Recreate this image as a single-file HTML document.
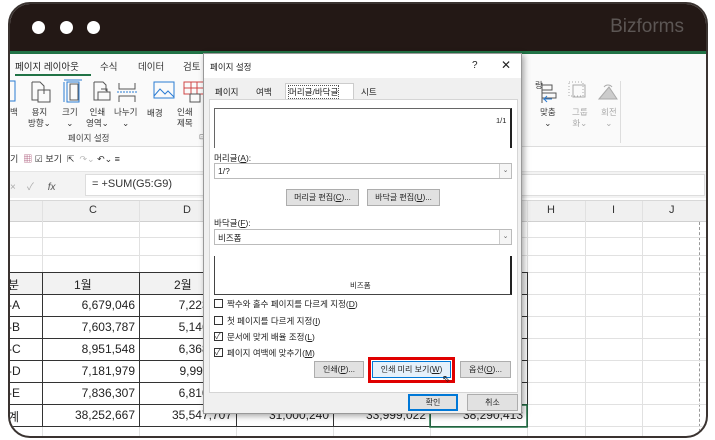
<!DOCTYPE html>
<html><head><meta charset="utf-8"><style>
*{margin:0;padding:0;box-sizing:border-box}
body{width:715px;height:440px;background:#fff;position:relative;overflow:hidden;font-family:"Liberation Sans","Noto Sans CJK KR",sans-serif;font-size:9px;color:#333}
.a{position:absolute}
.frame{left:8px;top:2px;width:700px;height:436px;border:2px solid #3a3330;border-radius:22px;overflow:hidden;background:#fff}
.bar{left:0;top:0;width:100%;height:47px;background:#231815}
.dot{width:13px;height:13px;border-radius:50%;background:#fff;top:17px}
.cell{position:absolute;font-size:12px;color:#222;text-align:right}
.hl{position:absolute;height:1px;background:#e1e1e1}
.vl{position:absolute;width:1px;background:#e1e1e1}
.btn{position:absolute;background:#e1e1e1;border:1px solid #adadad;font-size:8px;text-align:center;line-height:15px;color:#222}
.cb{position:absolute;width:9px;height:9px;border:1px solid #333;background:#fff}
.lb{position:absolute;font-size:8.5px;color:#222}
</style></head><body>
<div class="a frame">
 <div class="a bar"></div>
 <div class="a dot" style="left:22px"></div><div class="a dot" style="left:50px"></div><div class="a dot" style="left:77px"></div>
 <div class="a" style="right:22px;top:12px;font-size:19px;color:#5c5654">Bizforms</div>
 <div class="a" style="left:0;top:47px;width:100%;height:3px;background:#217346"></div>
 <div class="a" style="left:0;top:50px;width:100%;height:93px;background:#fafafa;border-bottom:1px solid #ddd"></div>
 <div class="a" style="left:5px;top:55px;font-size:9.5px;color:#222">페이지 레이아웃</div>
 <div class="a" style="left:5px;top:70px;width:76px;height:2px;background:#217346"></div>
 <div class="a" style="left:90px;top:55px;font-size:9.5px">수식</div>
 <div class="a" style="left:128px;top:55px;font-size:9.5px">데이터</div>
 <div class="a" style="left:173px;top:55px;font-size:9.5px">검토</div>
 <div class="a" style="left:0;top:103px;font-size:8.5px;line-height:11px;color:#444">백</div>
 <div class="a" style="left:18px;top:103px;font-size:8.5px;line-height:11px;text-align:center">용지<br>방향⌄</div>
 <div class="a" style="left:52px;top:103px;font-size:8.5px;line-height:11px;text-align:center">크기<br>⌄</div>
 <div class="a" style="left:76px;top:103px;font-size:8.5px;line-height:11px;text-align:center">인쇄<br>영역⌄</div>
 <div class="a" style="left:104px;top:103px;font-size:8.5px;line-height:11px;text-align:center">나누기<br>⌄</div>
 <div class="a" style="left:137px;top:103px;font-size:8.5px">배경</div>
 <div class="a" style="left:167px;top:103px;font-size:8.5px;line-height:11px;text-align:center">인쇄<br>제목</div>
 <svg class="a" style="left:0;top:74px" width="200" height="28" fill="none" stroke="#555" stroke-width="1">
  <rect x="-3" y="3" width="8" height="20" stroke="#2b7cd3"/>
  <path d="M22 4h8l4 4v8M22 4v18h6M28 12h12v12H28z"/>
  <path d="M57 4h12v20H57zM54 2h18M54 4v20" stroke="#2b7cd3"/><path d="M60 6h8v16h-8z"/>
  <path d="M84 4h9l3 3v6M84 4v18h4M88 14h12v8H88zM91 11h6v3" />
  <path d="M109 5v6h16V5M109 24v-6h16v6"/><path d="M107 14h20" stroke="#2b7cd3" stroke-dasharray="2 1"/>
  <rect x="144" y="4" width="20" height="16" stroke="#2b7cd3"/><path d="M144 18l6-7 5 5 3-3 6 6" stroke="#2b7cd3"/>
  <path d="M174 4h20v12h-20zM174 10h20M181 4v12M187 4v12" stroke="#d04545"/><path d="M180 16h10v8h-10z"/>
 </svg>
 <div class="a" style="left:58px;top:128px;font-size:8.5px;color:#444">페이지 설정</div>
 <div class="a" style="left:189px;top:129px;font-size:7px;color:#666">⊡</div>
 <div class="a" style="left:525px;top:75px;font-size:8.5px">랑</div>
 <svg class="a" style="left:530px;top:77px" width="100" height="24" fill="none" stroke="#555" stroke-width="1">
  <path d="M2 2v20M2 4h10v5H2M2 12h14v5H2"/><path d="M12 18H4l3-3M4 18l3 3" stroke="#2b7cd3"/>
  <rect x="33" y="4" width="12" height="12" stroke="#aaa"/><rect x="29" y="1" width="14" height="14" stroke="#aaa" stroke-dasharray="1 2"/>
  <path d="M59 18l10-12 8 12z" stroke="#aaa" fill="#ccc"/><path d="M64 6a5 5 0 0 1 8 0" stroke="#aaa"/>
 </svg>
 <div class="a" style="left:530px;top:103px;font-size:8.5px;line-height:11px;text-align:center">맞춤<br>⌄</div>
 <div class="a" style="left:562px;top:103px;font-size:8.5px;line-height:11px;text-align:center;color:#aaa">그룹<br>화⌄</div>
 <div class="a" style="left:591px;top:103px;font-size:8.5px;line-height:11px;text-align:center;color:#aaa">회전<br>⌄</div>
 <div class="a" style="left:610px;top:77px;width:1px;height:62px;background:#ddd"></div>
 <div class="a" style="left:0;top:143px;width:100%;height:24px;background:#fff"></div>
 <div class="a" style="left:0;top:148px;font-size:9px">기 &nbsp;<span style="color:#a57">▦</span> ☑ 보기 &nbsp;⇱ &nbsp;<span style="color:#bbb">↷⌄</span> ↶⌄ ≡</div>
 <div class="a" style="left:0;top:167px;width:100%;height:27px;background:#f3f3f3;border-top:1px solid #e5e5e5"></div>
 <div class="a" style="left:75px;top:170px;width:620px;height:22px;background:#fff;border:1px solid #ddd"></div>
 <div class="a" style="left:0;top:174px;font-size:10px;color:#aaa">×&nbsp;&nbsp;&nbsp;&nbsp;✓&nbsp;&nbsp;&nbsp;&nbsp;&nbsp;<i style="color:#555">fx</i></div>
 <div class="a" style="left:82px;top:174px;font-size:11px;color:#333">= +SUM(G5:G9)</div>
 <div class="a" style="left:0;top:196px;width:100%;height:22px;background:#f0f0f0;border-bottom:1px solid #d0d0d0;border-top:1px solid #d8d8d8"></div>
 <div class="a" style="left:79px;top:200px;font-size:11px">C</div>
 <div class="a" style="left:173px;top:200px;font-size:11px">D</div>
 <div class="a" style="left:537px;top:200px;font-size:11px">H</div>
 <div class="a" style="left:602px;top:200px;font-size:11px">I</div>
 <div class="a" style="left:659px;top:200px;font-size:11px">J</div>
 <div class="vl" style="left:32px;top:197px;height:240px"></div>
 <div class="vl" style="left:129px;top:197px;height:240px"></div>
 <div class="vl" style="left:226px;top:197px;height:240px"></div>
 <div class="vl" style="left:323px;top:197px;height:240px"></div>
 <div class="vl" style="left:420px;top:197px;height:240px"></div>
 <div class="vl" style="left:517px;top:197px;height:240px"></div>
 <div class="vl" style="left:575px;top:197px;height:240px"></div>
 <div class="vl" style="left:632px;top:197px;height:240px"></div>
 <div class="a" style="left:689px;top:218px;width:0;height:220px;border-left:1px dashed #999"></div>
 <div class="hl" style="left:0;top:233px;width:100%"></div>
 <div class="hl" style="left:0;top:251px;width:100%"></div>
 <div class="hl" style="left:0;top:268px;width:100%"></div>
 <div class="hl" style="left:0;top:290px;width:100%"></div>
 <div class="hl" style="left:0;top:312px;width:100%"></div>
 <div class="hl" style="left:0;top:334px;width:100%"></div>
 <div class="hl" style="left:0;top:356px;width:100%"></div>
 <div class="hl" style="left:0;top:378px;width:100%"></div>
 <div class="hl" style="left:0;top:400px;width:100%"></div>
 <div class="hl" style="left:0;top:422px;width:100%"></div>
 <div class="a" style="left:0;top:268px;width:517px;height:22px;background:#f2f2f2"></div>
 <svg class="a" style="left:0;top:268px" width="520" height="156" stroke="#333" stroke-width="1" fill="none">
  <path d="M0 .5H517M0 22.5H517M0 44.5H517M0 66.5H517M0 88.5H517M0 110.5H517M0 132.5H517M0 154.5H517"/>
  <path d="M32.5 0v155M129.5 0v155M226.5 0v155M323.5 0v155M420.5 0v155M517.5 0v155"/>
  <rect x="420" y="133" width="97" height="22" stroke="#217346" stroke-width="1.5"/>
 </svg>
 <div class="cell" style="left:-2px;top:272px;text-align:left">분</div>
 <div class="cell" style="left:64px;top:272px">1월</div>
 <div class="cell" style="left:164px;top:272px">2월</div>
 <div class="cell" style="left:-2px;top:294px;text-align:left">-A</div>
 <div class="cell" style="left:-2px;top:316px;text-align:left">-B</div>
 <div class="cell" style="left:-2px;top:338px;text-align:left">-C</div>
 <div class="cell" style="left:-2px;top:360px;text-align:left">-D</div>
 <div class="cell" style="left:-2px;top:382px;text-align:left">-E</div>
 <div class="cell" style="left:-2px;top:404px;text-align:left">계</div>
 <div class="cell" style="left:33px;top:294px;width:92px">6,679,046</div>
 <div class="cell" style="left:33px;top:316px;width:92px">7,603,787</div>
 <div class="cell" style="left:33px;top:338px;width:92px">8,951,548</div>
 <div class="cell" style="left:33px;top:360px;width:92px">7,181,979</div>
 <div class="cell" style="left:33px;top:382px;width:92px">7,836,307</div>
 <div class="cell" style="left:33px;top:404px;width:92px">38,252,667</div>
 <div class="cell" style="left:130px;top:294px;width:92px">7,223,481</div>
 <div class="cell" style="left:130px;top:316px;width:92px">5,146,520</div>
 <div class="cell" style="left:130px;top:338px;width:92px">6,368,904</div>
 <div class="cell" style="left:130px;top:360px;width:92px">9,998,117</div>
 <div class="cell" style="left:130px;top:382px;width:92px">6,810,685</div>
 <div class="cell" style="left:130px;top:404px;width:92px">35,547,707</div>
 <div class="cell" style="left:227px;top:404px;width:92px">31,000,240</div>
 <div class="cell" style="left:324px;top:404px;width:92px">33,999,022</div>
 <div class="cell" style="left:421px;top:404px;width:92px">38,290,413</div>
</div>
<div class="a" style="left:203px;top:53px;width:319px;height:361px;background:#f0f0f0;border:1px solid #999;box-shadow:2px 2px 6px rgba(0,0,0,.35)">
 <div class="a" style="left:0;top:0;width:100%;height:24px;background:#fff"></div>
 <div class="lb" style="left:6px;top:7px">페이지 설정</div>
 <div class="lb" style="left:268px;top:6px;font-size:10px">?</div>
 <div class="lb" style="left:297px;top:4px;font-size:12px">✕</div>
 <div class="lb" style="left:11px;top:32px">페이지</div>
 <div class="lb" style="left:52px;top:32px">여백</div>
 <div class="a" style="left:81px;top:29px;width:69px;height:17px;background:#fff;border:1px solid #ccc;border-bottom:none"></div>
 <div class="lb" style="left:85px;top:32px;outline:1px dotted #555">머리글/바닥글</div>
 <div class="lb" style="left:157px;top:32px">시트</div>
 <div class="a" style="left:5px;top:45px;width:309px;height:294px;background:#fff;border:1px solid #d5d5d5"></div>
 <div class="a" style="left:10px;top:54px;width:298px;height:40px;border:1px solid #666;border-bottom:none;border-right:2px solid #222"></div>
 <div class="lb" style="left:292px;top:62px;font-size:7.5px">1/1</div>
 <div class="lb" style="left:10px;top:98px">머리글(<u>A</u>):</div>
 <div class="a" style="left:10px;top:109px;width:298px;height:16px;border:1px solid #bbb;background:#fff"></div>
 <div class="lb" style="left:14px;top:112px">1/?</div>
 <div class="a" style="left:295px;top:110px;width:12px;height:14px;background:#f5f5f5;border-left:1px solid #ccc;font-size:7px;text-align:center;line-height:14px;color:#666">⌄</div>
 <div class="btn" style="left:82px;top:135px;width:73px;height:17px">머리글 편집(<u>C</u>)...</div>
 <div class="btn" style="left:163px;top:135px;width:73px;height:17px">바닥글 편집(<u>U</u>)...</div>
 <div class="lb" style="left:10px;top:163px">바닥글(<u>F</u>):</div>
 <div class="a" style="left:10px;top:175px;width:298px;height:16px;border:1px solid #bbb;background:#fff"></div>
 <div class="lb" style="left:14px;top:178px">비즈폼</div>
 <div class="a" style="left:295px;top:176px;width:12px;height:14px;background:#f5f5f5;border-left:1px solid #ccc;font-size:7px;text-align:center;line-height:14px;color:#666">⌄</div>
 <div class="a" style="left:10px;top:202px;width:298px;height:39px;border:1px solid #444;border-top:none;border-right:2px solid #222"></div>
 <div class="lb" style="left:146px;top:226px;font-size:7.5px">비즈폼</div>
 <div class="cb" style="left:10px;top:245px"></div><div class="lb" style="left:23px;top:244px">짝수와 홀수 페이지를 다르게 지정(<u>D</u>)</div>
 <div class="cb" style="left:10px;top:262px"></div><div class="lb" style="left:23px;top:261px">첫 페이지를 다르게 지정(<u>I</u>)</div>
 <div class="cb" style="left:10px;top:278px;font-size:8px;line-height:7px">✓</div><div class="lb" style="left:23px;top:277px">문서에 맞게 배율 조정(<u>L</u>)</div>
 <div class="cb" style="left:10px;top:294px;font-size:8px;line-height:7px">✓</div><div class="lb" style="left:23px;top:293px">페이지 여백에 맞추기(<u>M</u>)</div>
 <div class="btn" style="left:110px;top:307px;width:50px;height:17px">인쇄(<u>P</u>)...</div>
 <div class="a" style="left:164px;top:303px;width:87px;height:26px;border:3px solid #e00000"></div>
 <div class="btn" style="left:168px;top:307px;width:79px;height:17px;background:#e5f1fb;border-color:#0078d7">인쇄 미리 보기(<u>W</u>)</div>
 <div class="lb" style="left:238px;top:320px;font-size:10px">⇖</div>
 <div class="btn" style="left:256px;top:307px;width:51px;height:17px">옵션(<u>O</u>)...</div>
 <div class="btn" style="left:204px;top:340px;width:50px;height:17px;border:2px solid #0078d7;line-height:13px">확인</div>
 <div class="btn" style="left:263px;top:340px;width:51px;height:17px">취소</div>
</div>
</body></html>
